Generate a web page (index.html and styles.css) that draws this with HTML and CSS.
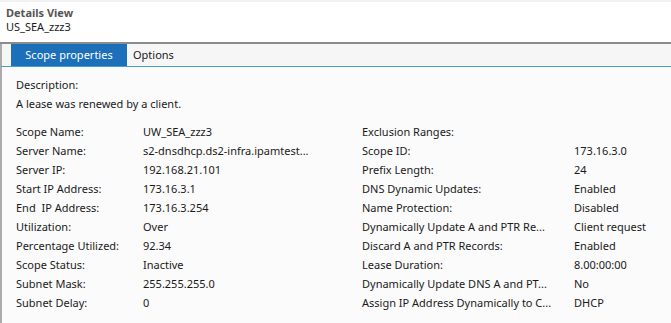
FILE: index.html
```html
<!DOCTYPE html>
<html>
<head>
<meta charset="utf-8">
<link rel="stylesheet" href="styles.css">
</head>
<body>
<div class="strip"></div>
<div class="header">
  <div class="title">Details View</div>
  <div class="subtitle">US_SEA_zzz3</div>
</div>
<div class="tabs">
  <div class="tab active">Scope properties</div>
  <div class="tab">Options</div>
</div>
<div class="content">
  <div class="desc-label">Description:</div>
  <div class="desc-text">A lease was renewed by a client.</div>
  <div class="grid">
    <div class="col left">
      <div class="row"><span class="k">Scope Name:</span><span class="v">UW_SEA_zzz3</span></div>
      <div class="row"><span class="k">Server Name:</span><span class="v">s2-dnsdhcp.ds2-infra.ipamtest...</span></div>
      <div class="row"><span class="k">Server IP:</span><span class="v">192.168.21.101</span></div>
      <div class="row"><span class="k">Start IP Address:</span><span class="v">173.16.3.1</span></div>
      <div class="row"><span class="k">End&nbsp; IP Address:</span><span class="v">173.16.3.254</span></div>
      <div class="row"><span class="k">Utilization:</span><span class="v">Over</span></div>
      <div class="row"><span class="k">Percentage Utilized:</span><span class="v">92.34</span></div>
      <div class="row"><span class="k">Scope Status:</span><span class="v">Inactive</span></div>
      <div class="row"><span class="k">Subnet Mask:</span><span class="v">255.255.255.0</span></div>
      <div class="row"><span class="k">Subnet Delay:</span><span class="v">0</span></div>
    </div>
    <div class="col right">
      <div class="row"><span class="k">Exclusion Ranges:</span><span class="v"></span></div>
      <div class="row"><span class="k">Scope ID:</span><span class="v">173.16.3.0</span></div>
      <div class="row"><span class="k">Prefix Length:</span><span class="v">24</span></div>
      <div class="row"><span class="k">DNS Dynamic Updates:</span><span class="v">Enabled</span></div>
      <div class="row"><span class="k">Name Protection:</span><span class="v">Disabled</span></div>
      <div class="row"><span class="k">Dynamically Update A and PTR Re...</span><span class="v">Client request</span></div>
      <div class="row"><span class="k">Discard A and PTR Records:</span><span class="v">Enabled</span></div>
      <div class="row"><span class="k">Lease Duration:</span><span class="v">8.00:00:00</span></div>
      <div class="row"><span class="k">Dynamically Update DNS A and PT...</span><span class="v">No</span></div>
      <div class="row"><span class="k">Assign IP Address Dynamically to C...</span><span class="v">DHCP</span></div>
    </div>
  </div>
</div>
</body>
</html>
```
FILE: styles.css
```css
html, body {
  margin: 0;
  padding: 0;
  width: 671px;
  height: 323px;
  overflow: hidden;
  background: #fbfbfb;
  font-family: "Noto Sans", "Open Sans", sans-serif;
  font-size: 11px;
  color: #1a1a1a;
}
.strip {
  height: 2px;
  background: #f2f2f2;
}
.header {
  background: #ffffff;
  height: 42px;
  box-sizing: border-box;
  padding: 3px 6px 0 6px;
  border-bottom: 2px solid #8c8c8c;
}
.title {
  font-weight: bold;
  color: #555555;
  line-height: 15px;
}
.subtitle {
  line-height: 13px;
  color: #1a1a1a;
}
.tabs {
  display: flex;
  height: 22px;
  background: #f6f6f6;
  border-left: 2px solid #acacac;
  border-bottom: 1px solid #44a0cc;
  padding-left: 9px;
  gap: 6px;
}
.tab {
  line-height: 22px;
  color: #1a1a1a;
}
.tab.active {
  background: #1c6fb9;
  color: #ffffff;
  width: 116px;
  text-align: center;
}
.content {
  border-left: 2px solid #acacac;
  background: #fbfbfb;
  height: 260px;
  padding: 8px 0 0 14px;
  box-sizing: border-box;
}
.desc-label {
  line-height: 19px;
}
.desc-text {
  line-height: 19px;
  margin-bottom: 9px;
}
.grid {
  display: flex;
}
.col {
  display: flex;
  flex-direction: column;
}
.col.left {
  width: 346px;
  flex-shrink: 0;
}
.col.right {
  flex: 1;
}
.row {
  display: flex;
  height: 19px;
  line-height: 19px;
  white-space: nowrap;
}
.col .k {
  width: 127px;
  flex-shrink: 0;
}
.col.right .k {
  width: 212px;
}
```
